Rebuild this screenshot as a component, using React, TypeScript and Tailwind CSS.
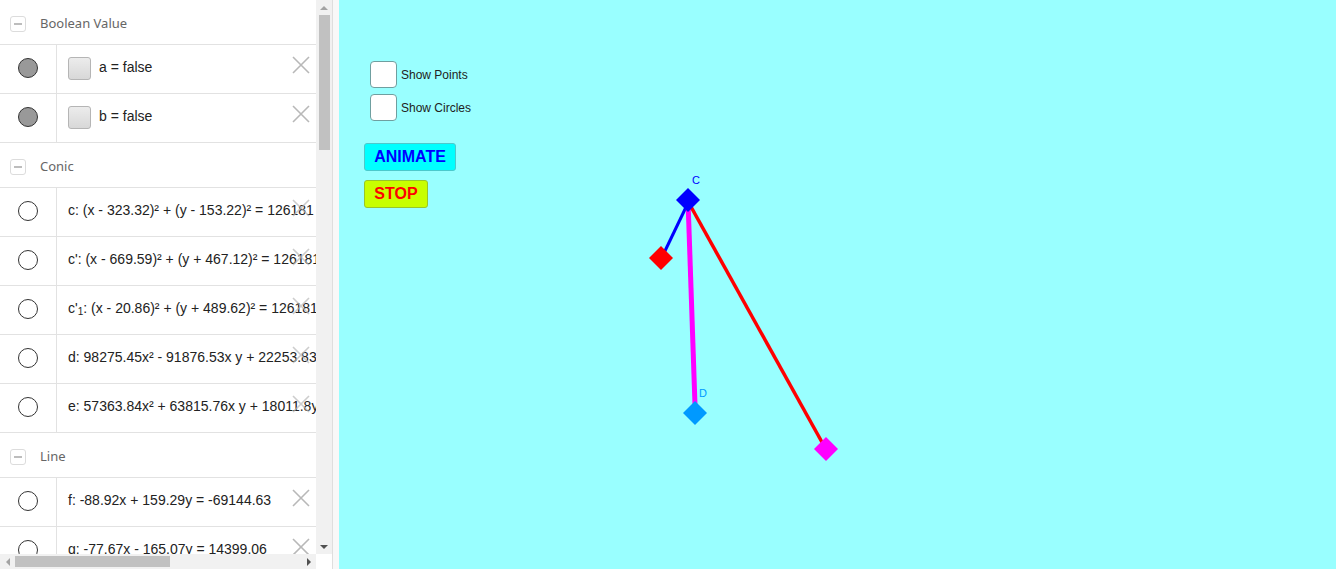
import React from 'react';

const formulaFont = { fontFamily: '"Liberation Sans", Arial, sans-serif' };

const Minus = () => (
  <div className="w-[16px] h-[16px] rounded-[3px] border border-[#dcdcdc] flex items-center justify-center">
    <div className="w-[8px] h-[1.5px] bg-[#bdbdbd]" />
  </div>
);

const DeleteX = ({ faded }: { faded?: boolean }) => (
  <svg
    className={`absolute right-[6px] top-[11px] w-[18px] h-[18px] ${faded ? 'opacity-70' : ''}`}
    viewBox="0 0 18 18"
  >
    <path d="M1 1L17 17M17 1L1 17" stroke="#b8b8b8" strokeWidth="1.6" fill="none" />
  </svg>
);

const Header = ({ title }: { title: string }) => (
  <div className="h-[45px] shrink-0 flex items-center gap-[14px] pl-[10px] pt-[4px] border-b border-[#e2e2e2]">
    <Minus />
    <span className="text-[13px] text-[#666]" style={{ fontFamily: '"Noto Sans", sans-serif' }}>
      {title}
    </span>
  </div>
);

const Row = ({
  filled,
  children,
  faded,
}: {
  filled?: boolean;
  children: React.ReactNode;
  faded?: boolean;
}) => (
  <div className="h-[49px] shrink-0 flex border-b border-[#e2e2e2]">
    <div className="w-[57px] shrink-0 border-r border-[#e2e2e2] flex items-center justify-center pb-[2px]">
      <div
        className={`w-[20px] h-[20px] rounded-full border-[1.5px] border-[#333] ${filled ? 'bg-[#999]' : 'bg-white'}`}
      />
    </div>
    <div
      className="relative flex-1 flex items-center pl-[11px] pb-[4px] overflow-hidden whitespace-nowrap text-[14px] text-[#222]"
      style={formulaFont}
    >
      {children}
      <DeleteX faded={faded} />
    </div>
  </div>
);

const BoolBox = () => (
  <div className="w-[23px] h-[23px] mr-[8px] mt-[2px] rounded-[3px] border border-[#b5b5b5] bg-gradient-to-b from-[#ececec] to-[#d8d8d8]" />
);

export default function App() {
  return (
    <div className="w-[1336px] h-[571px] flex bg-white overflow-hidden">
      {/* Algebra view */}
      <div className="w-[332px] h-[569px] shrink-0 flex flex-col">
        <div className="flex flex-1 min-h-0">
          <div className="w-[316px] flex flex-col overflow-hidden">
            <Header title="Boolean Value" />
            <Row filled>
              <BoolBox />
              a = false
            </Row>
            <Row filled>
              <BoolBox />
              b = false
            </Row>
            <Header title="Conic" />
            <Row faded>c: (x - 323.32)² + (y - 153.22)² = 126181</Row>
            <Row faded>c': (x - 669.59)² + (y + 467.12)² = 126181</Row>
            <Row faded>
              <span>
                c'<sub className="text-[10px]">1</sub>: (x - 20.86)² + (y + 489.62)² = 126181
              </span>
            </Row>
            <Row faded>d: 98275.45x² - 91876.53x y + 22253.83y²</Row>
            <Row faded>e: 57363.84x² + 63815.76x y + 18011.8y²</Row>
            <Header title="Line" />
            <Row>f: -88.92x + 159.29y = -69144.63</Row>
            <Row>g: -77.67x - 165.07y = 14399.06</Row>
          </div>
          {/* vertical scrollbar */}
          <div className="w-[16px] bg-[#f1f1f1] flex flex-col items-center">
            <div className="h-[15px] flex items-center justify-center">
              <div className="w-0 h-0 border-l-[4px] border-r-[4px] border-b-[4px] border-l-transparent border-r-transparent border-b-[#a3a3a3]" />
            </div>
            <div className="w-[11px] h-[135px] bg-[#c1c1c1]" />
            <div className="flex-1" />
            <div className="h-[15px] flex items-center justify-center">
              <div className="w-0 h-0 border-l-[4px] border-r-[4px] border-t-[4px] border-l-transparent border-r-transparent border-t-[#505050]" />
            </div>
          </div>
        </div>
        {/* horizontal scrollbar */}
        <div className="h-[15px] flex">
          <div className="w-[316px] bg-[#f1f1f1] flex items-center">
            <div className="w-[15px] flex items-center justify-center">
              <div className="w-0 h-0 border-t-[4px] border-b-[4px] border-r-[4px] border-t-transparent border-b-transparent border-r-[#a3a3a3]" />
            </div>
            <div className="w-[155px] h-[11px] bg-[#c1c1c1]" />
            <div className="flex-1" />
            <div className="w-[15px] flex items-center justify-center">
              <div className="w-0 h-0 border-t-[4px] border-b-[4px] border-l-[4px] border-t-transparent border-b-transparent border-l-[#505050]" />
            </div>
          </div>
          <div className="w-[16px] bg-white" />
        </div>
      </div>

      {/* splitter */}
      <div className="w-[7px] h-[569px] shrink-0 bg-[#f8f8f8] border-l border-[#dedede]" />

      {/* Graphics view */}
      <div
        className="relative flex-1 h-[569px] bg-[#99ffff] overflow-hidden"
        style={{ fontFamily: '"Liberation Sans", Arial, sans-serif' }}
      >
        <div className="absolute left-[31px] top-[61px] flex flex-col gap-[6px]">
          {['Show Points', 'Show Circles'].map((label) => (
            <div key={label} className="flex items-center gap-[4px]">
              <div className="w-[27px] h-[27px] rounded-[4px] border-[1.5px] border-[#6f9fa0] bg-white" />
              <span className="text-[12px] text-[#222]">{label}</span>
            </div>
          ))}
        </div>
        <div className="absolute left-[25px] top-[143px] flex flex-col items-start gap-[9px]">
          <button className="w-[92px] h-[28px] rounded-[3px] bg-[#00ffff] border border-[#4cc9cc] text-[16px] font-bold text-[#0000ff] leading-none">
            ANIMATE
          </button>
          <button className="w-[64px] h-[28px] rounded-[3px] bg-[#c8ff00] border border-[#98c62a] text-[16px] font-bold text-[#ff0000] leading-none">
            STOP
          </button>
        </div>

        <svg className="absolute left-0 top-0" width="997" height="569" viewBox="0 0 997 569">
          <line x1="349" y1="203" x2="325" y2="253" stroke="#0000ff" strokeWidth="3" />
          <line x1="349" y1="200" x2="356" y2="405" stroke="#ff00ff" strokeWidth="5" />
          <line x1="351" y1="205" x2="484" y2="444" stroke="#ff0000" strokeWidth="3.5" />
          <polygon points="349,188 361,200 349,212 337,200" fill="#0000ff" />
          <polygon points="322,246 334,258 322,270 310,258" fill="#ff0000" />
          <polygon points="356,401 368,413 356,425 344,413" fill="#0099ff" />
          <polygon points="487,437 499,449 487,461 475,449" fill="#ff00ff" />
          <text x="353" y="184" fontSize="11" fill="#0000ff" fontFamily="Liberation Sans, Arial, sans-serif">
            C
          </text>
          <text x="360" y="397" fontSize="11" fill="#0099ff" fontFamily="Liberation Sans, Arial, sans-serif">
            D
          </text>
        </svg>
      </div>
    </div>
  );
}
